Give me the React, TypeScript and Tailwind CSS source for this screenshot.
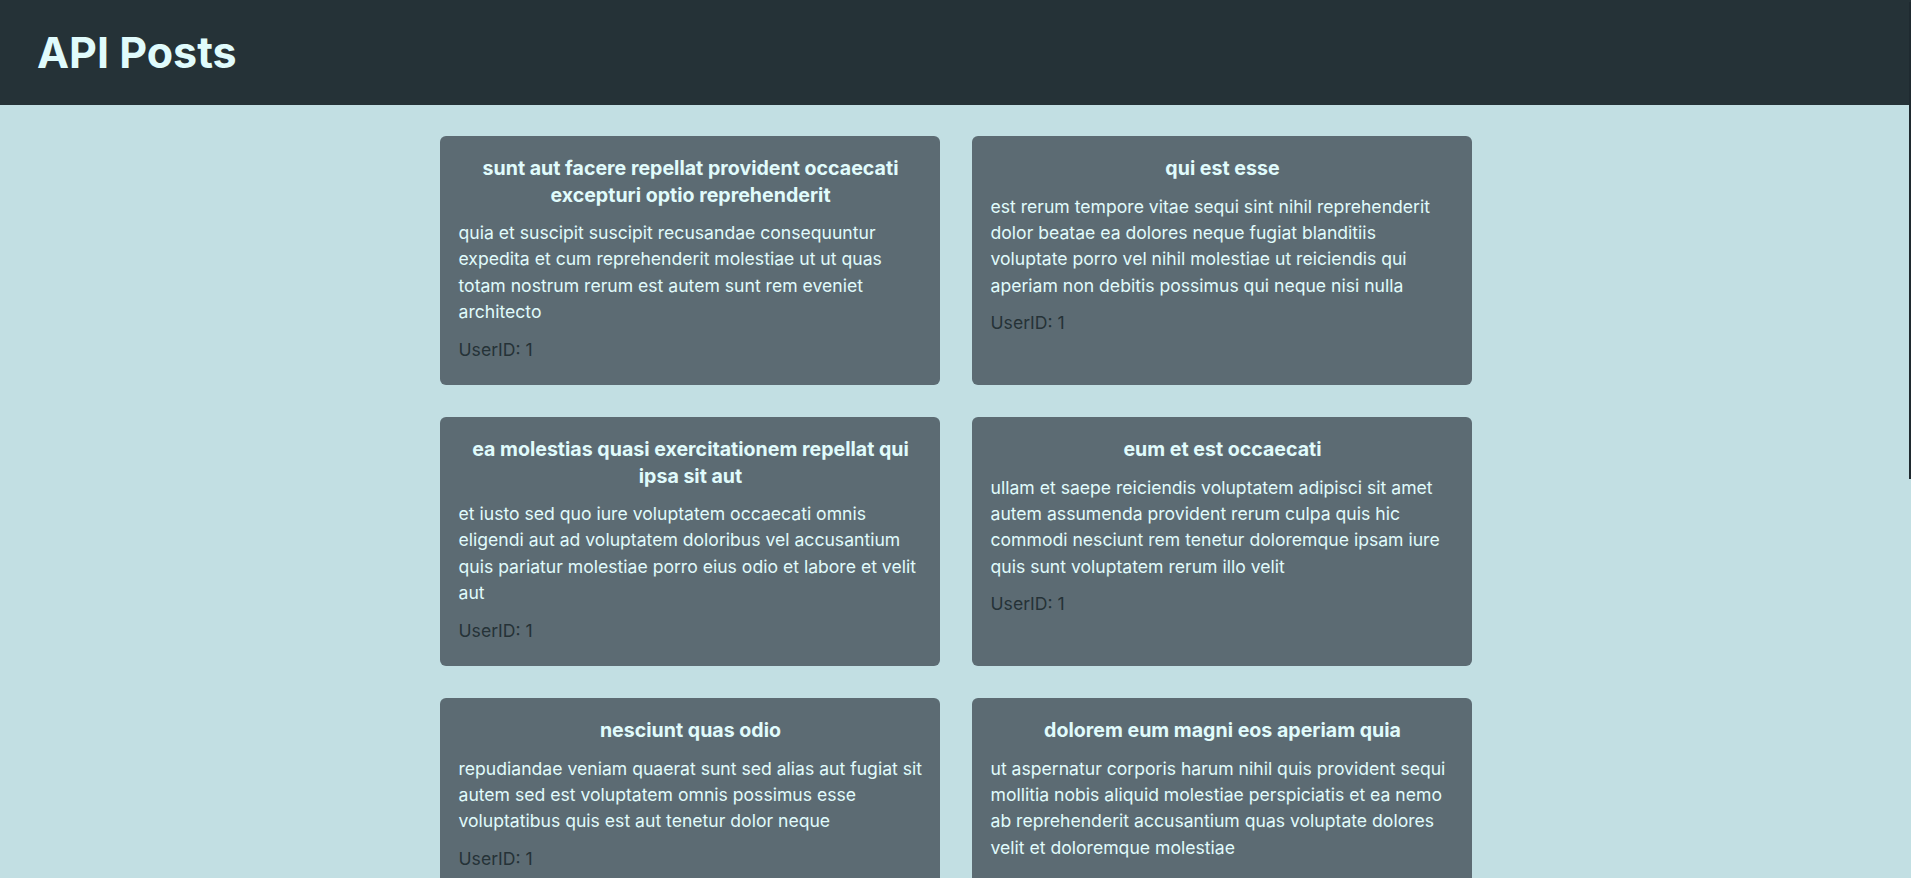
const posts = [
  {
    id: 1,
    userId: 1,
    title: "sunt aut facere repellat provident occaecati excepturi optio reprehenderit",
    body: "quia et suscipit suscipit recusandae consequuntur expedita et cum reprehenderit molestiae ut ut quas totam nostrum rerum est autem sunt rem eveniet architecto",
  },
  {
    id: 2,
    userId: 1,
    title: "qui est esse",
    body: "est rerum tempore vitae sequi sint nihil reprehenderit dolor beatae ea dolores neque fugiat blanditiis voluptate porro vel nihil molestiae ut reiciendis qui aperiam non debitis possimus qui neque nisi nulla",
  },
  {
    id: 3,
    userId: 1,
    title: "ea molestias quasi exercitationem repellat qui ipsa sit aut",
    body: "et iusto sed quo iure voluptatem occaecati omnis eligendi aut ad voluptatem doloribus vel accusantium quis pariatur molestiae porro eius odio et labore et velit aut",
  },
  {
    id: 4,
    userId: 1,
    title: "eum et est occaecati",
    body: "ullam et saepe reiciendis voluptatem adipisci sit amet autem assumenda provident rerum culpa quis hic commodi nesciunt rem tenetur doloremque ipsam iure quis sunt voluptatem rerum illo velit",
  },
  {
    id: 5,
    userId: 1,
    title: "nesciunt quas odio",
    body: "repudiandae veniam quaerat sunt sed alias aut fugiat sit autem sed est voluptatem omnis possimus esse voluptatibus quis est aut tenetur dolor neque",
  },
  {
    id: 6,
    userId: 1,
    title: "dolorem eum magni eos aperiam quia",
    body: "ut aspernatur corporis harum nihil quis provident sequi mollitia nobis aliquid molestiae perspiciatis et ea nemo ab reprehenderit accusantium quas voluptate dolores velit et doloremque molestiae",
  },
  {
    id: 7,
    userId: 1,
    title: "magnam facilis autem",
    body: "dolore placeat quibusdam ea quo vitae magni quis enim qui quis quo nemo aut saepe quidem repellat excepturi ut quia sunt ut sequi eos ea sed quas",
  },
  {
    id: 8,
    userId: 1,
    title: "dolorem dolore est ipsam",
    body: "dignissimos aperiam dolorem qui eum facilis quibusdam animi sint suscipit qui sint possimus cum quaerat magni maiores excepturi ipsam ut commodi dolor voluptatum modi aut vitae",
  },
];

function PostCard({ post }: { post: (typeof posts)[number] }) {
  return (
    <div className="bg-[#5c6b73] rounded-md pl-[19px] pr-[17px] pt-[19px] pb-[22px]">
      <h2 className="text-center text-[19.6px] leading-[26.5px] font-bold text-[#e0fbfc] mb-3">
        {post.title}
      </h2>
      <p className="text-[17.6px] leading-[26.4px] text-[#e0fbfc]">{post.body}</p>
      <p className="mt-[11px] text-[17.6px] leading-[26.4px] text-[#253237]">
        UserID: {post.userId}
      </p>
    </div>
  );
}

export default function App() {
  return (
    <div className="min-h-screen bg-[#c2dfe3] font-['Inter',sans-serif]">
      <header className="bg-[#253237] h-[105px] flex items-center px-[37px]">
        <h1 className="text-[43px] font-bold text-[#e0fbfc]">API Posts</h1>
      </header>

      {/* thin dark strip along the right edge */}
      <div className="absolute right-0 top-[2px] w-[2px] h-[477px] bg-[#1f2a30]" />

      <main className="w-[1032px] mx-auto pt-[31px] pb-8 grid grid-cols-2 gap-8">
        {posts.map((post) => (
          <PostCard key={post.id} post={post} />
        ))}
      </main>
    </div>
  );
}
